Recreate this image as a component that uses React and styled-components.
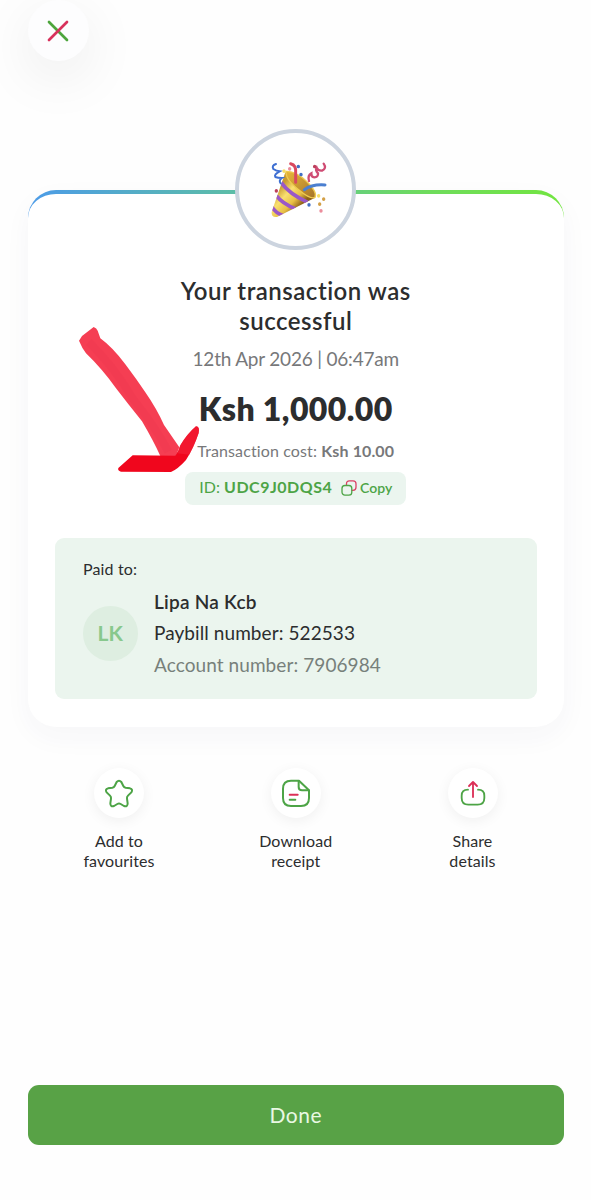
import styled, { createGlobalStyle } from "styled-components";

const actions = [
    { icon: <StarIcon />, lines: ["Add to", "favourites"] },
    { icon: <ReceiptIcon />, lines: ["Download", "receipt"] },
    { icon: <ShareIcon />, lines: ["Share", "details"] },
];

export default function App(){
    return (
        <Page>
            <GlobalStyle />
            <CloseButton aria-label="Close">
                <CloseIcon />
            </CloseButton>
            <Card>
                <Badge>
                    <PartyPopper />
                </Badge>
                <Title>Your transaction was<br />successful</Title>
                <DateText>12th Apr 2026 | 06:47am</DateText>
                <Amount>Ksh 1,000.00</Amount>
                <Cost>Transaction cost: <b>Ksh 10.00</b></Cost>
                <IdPill>
                    <IdText>ID: <b>UDC9J0DQS4</b></IdText>
                    <CopyButton>
                        <CopyIcon />
                        <span>Copy</span>
                    </CopyButton>
                </IdPill>
                <PaidBox>
                    <PaidLabel>Paid to:</PaidLabel>
                    <Recipient>
                        <Avatar>LK</Avatar>
                        <RecipientInfo>
                            <Name>Lipa Na Kcb</Name>
                            <Paybill>Paybill number: 522533</Paybill>
                            <Account>Account number: 7906984</Account>
                        </RecipientInfo>
                    </Recipient>
                </PaidBox>
            </Card>
            <Actions>
                {actions.map(({icon, lines})=>(
                    <Action key={lines[0]}>
                        <ActionCircle>{icon}</ActionCircle>
                        <p>{lines[0]}<br />{lines[1]}</p>
                    </Action>
                ))}
            </Actions>
            <DoneButton>Done</DoneButton>
            <Arrow />
        </Page>
    );
}

function CloseIcon(){
    return (
        <svg width="22" height="22" viewBox="0 0 22 22" fill="none" strokeWidth="2.7" strokeLinecap="round">
            <path d="M2 2L20 20" stroke="#4da53c" />
            <path d="M20 2L2 20" stroke="#d8325c" />
        </svg>
    );
}

function StarIcon(){
    return (
        <svg width="50" height="50" viewBox="0 0 150 150" fill="none" stroke="#4da446" strokeWidth="6" strokeLinejoin="round">
            <path d="M68 42Q75 34 82 42L88 54Q90 58 95 59L108 61Q118 64 112 73L102 83Q98 87 99 92L101 106Q101 118 90 114L80 108Q75 105 70 108L60 114Q49 118 49 106L51 92Q52 87 48 83L38 73Q32 64 42 61L55 59Q60 58 62 54Z" />
        </svg>
    );
}

function ReceiptIcon(){
    return (
        <svg width="50" height="50" viewBox="0 0 150 150" fill="none" stroke="#4da446" strokeWidth="6" strokeLinejoin="round" strokeLinecap="round">
            <path d="M84 38H60Q36 38 36 62V90Q36 114 60 114H90Q114 114 114 90V67Z" />
            <path d="M83 39V57Q83 67 93 67H113" />
            <path d="M56 80H80" stroke="#dc3057" />
            <path d="M56 95H73" />
        </svg>
    );
}

function ShareIcon(){
    return (
        <svg width="50" height="50" viewBox="0 0 150 150" fill="none" strokeWidth="5.5" strokeLinejoin="round" strokeLinecap="round">
            <path d="M60 65C48 65 41 72 41 83V90Q41 110 61 110H89Q109 110 109 90V83C109 72 102 65 90 65" stroke="#4da446" />
            <path d="M75 87V42M63 54L75 42L87 54" stroke="#dc3057" />
        </svg>
    );
}

function CopyIcon(){
    return (
        <svg width="16" height="16" viewBox="0 0 16 16" fill="none" strokeWidth="1.3" strokeLinecap="round">
            <path d="M5.5 5.2V3.8Q5.5 .9 8.4 .9H12Q15 .9 15 3.8V7.3Q15 10.3 12 10.3H11" stroke="#dc4065" />
            <rect x="1" y="5.5" width="9.8" height="9.6" rx="2.9" stroke="#4da446" />
        </svg>
    );
}

function PartyPopper(){
    return (
        <svg width="64" height="64" viewBox="117 113 192 192" fill="none" strokeLinecap="round">
            <defs>
                <linearGradient id="cone" x1="160" y1="205" x2="222" y2="262" gradientUnits="userSpaceOnUse">
                    <stop offset="0" stopColor="#c99a30" />
                    <stop offset=".35" stopColor="#f9e070" />
                    <stop offset=".7" stopColor="#e8bf45" />
                    <stop offset="1" stopColor="#8c5f18" />
                </linearGradient>
                <linearGradient id="mouth" x1="190" y1="160" x2="260" y2="235" gradientUnits="userSpaceOnUse">
                    <stop offset="0" stopColor="#e2b238" />
                    <stop offset="1" stopColor="#a8772a" />
                </linearGradient>
                <clipPath id="coneClip">
                    <path d="M181 156L140 275Q138 292 156 290L270 232Q226 222 181 156Z" />
                </clipPath>
            </defs>
            <path d="M181 156L140 275Q138 292 156 290L270 232Q226 222 181 156Z" fill="url(#cone)" />
            <g clipPath="url(#coneClip)" stroke="#9a58c8" strokeWidth="11" strokeLinecap="butt">
                <path d="M168 186Q192 220 248 246" />
                <path d="M154 226Q172 250 212 266" />
                <path d="M140 258Q150 278 176 286" />
            </g>
            <path d="M183 153Q212 151 246 184Q278 216 270 231Q258 239 221 208Q180 176 183 153Z" fill="url(#mouth)" stroke="#efcb50" strokeWidth="4" />
            <path d="M197 130Q215 134 212 160V186" stroke="#d9485f" strokeWidth="9" />
            <path d="M238 208Q262 191 300 194" stroke="#4b7fd0" strokeWidth="9" />
            <path d="M153 131Q139 136 145 146Q154 152 164 153Q146 163 151 170Q158 173 171 173Q160 180 167 189" stroke="#3e6fd2" strokeWidth="6" />
            <path d="M296 130Q306 144 291 151Q279 152 275 142Q270 150 279 159Q280 170 268 171Q258 170 259 159Q247 165 252 182" stroke="#cf4c74" strokeWidth="7" />
            <g strokeWidth="10">
                <path d="M177 152V153M281 226V227" stroke="#f5dd65" />
                <path d="M194 145V146M288 271V272" stroke="#eb8d9c" />
                <path d="M220 138V139M228 162V163M252 253V254" stroke="#426fc4" />
                <path d="M269 138V139M154 211V212" stroke="#bd405c" />
                <path d="M296 236V237M284 251V252" stroke="#d3a047" />
            </g>
        </svg>
    );
}

// hand drawn marker pointing at the transaction id
function Arrow(){
    return (
        <ArrowSvg width="150" height="180" viewBox="0 0 450 540">
            <path d="M57 92L66 78L101 51Q110 54 113 62L121 85Q158 112 196 163Q230 208 256 247Q290 296 312 345L358 412L345 445L302 440Q280 392 246 334Q204 282 168 235Q126 176 78 130Q66 114 57 92Z" fill="#f4213a" fillOpacity=".87" />
            <path d="M86 96Q158 164 219 267Q286 350 325 425" fill="none" stroke="#d51f3c" strokeWidth="24" strokeOpacity=".08" />
            <path d="M175 474L218 436L346 437Q358 420 361 406Q382 371 408 349Q420 350 416 369Q402 412 378 450Q354 477 333 486L183 485Q172 482 175 474Z" fill="#f0061d" />
            <path d="M361 406Q382 371 408 349Q420 350 416 369Q406 400 388 434L352 430Z" fill="#f4233a" fillOpacity=".6" />
        </ArrowSvg>
    );
}

const GlobalStyle = createGlobalStyle`
    *{
        box-sizing: border-box;
        margin: 0;
        padding: 0;
    }
    body{
        background-color: #FEFEFE;
        font-family: 'Lato', sans-serif;
        font-variant-ligatures: none;
        color: #2c2d2e;
    }
    button{
        border: none;
        font-family: inherit;
        cursor: pointer;
    }
`;

const Page = styled.div`
    position: relative;
    display: flex;
    flex-direction: column;
    width: 591px;
    height: 1200px;
    padding: 0 27px 55px 27.5px;
    overflow: hidden;
`;
const CloseButton = styled.button`
    display: flex;
    align-items: center;
    justify-content: center;
    width: 61px;
    height: 61px;
    border-radius: 50%;
    background-color: #FDFDFE;
    box-shadow: 0 16px 56px rgba(0, 0, 0, 0.08);
`;
const Card = styled.div`
    display: flex;
    flex-direction: column;
    align-items: center;
    height: 537px;
    margin-top: 129px;
    padding: 0 27.5px;
    border-top: 4px solid transparent;
    border-radius: 28px;
    background: linear-gradient(#FFFFFF, #FFFFFF) padding-box,
        linear-gradient(90deg, #4c9be8, #5fc39c 45%, #6fdc5c 75%, #72e540) 0 0 / 100% 60px no-repeat border-box;
    box-shadow: 0 10px 28px rgba(50, 50, 100, 0.04);
`;
const Badge = styled.div`
    display: flex;
    align-items: center;
    justify-content: center;
    flex-shrink: 0;
    width: 121px;
    height: 121px;
    margin-top: -65px;
    border: 4px solid #ccd4df;
    border-radius: 50%;
    background-color: #FFFFFF;
`;
const Title = styled.h1`
    margin-top: 26px;
    font-weight: 600;
    font-size: 24px;
    line-height: 30px;
    letter-spacing: 0.5px;
    text-align: center;
`;
const DateText = styled.p`
    margin-top: 11px;
    font-size: 19px;
    line-height: 24px;
    letter-spacing: -0.2px;
    color: #77787a;
`;
const Amount = styled.p`
    margin-top: 18px;
    font-weight: 800;
    font-size: 32px;
    line-height: 40px;
    letter-spacing: 0.4px;
`;
const Cost = styled.p`
    margin-top: 12px;
    font-size: 16px;
    line-height: 20px;
    letter-spacing: 0.12px;
    color: #77787a;
`;
const IdPill = styled.div`
    display: flex;
    align-items: center;
    flex-shrink: 0;
    width: 221px;
    height: 33px;
    margin-top: 10.5px;
    padding: 0 14px 1px;
    border-radius: 8px;
    background-color: #ebf5ef;
    color: #4da446;
`;
const IdText = styled.p`
    width: 142px;
    font-size: 16px;
    line-height: 20px;
    padding-bottom: 1px;
    white-space: nowrap;
    b{
        letter-spacing: 0.5px;
    }
`;
const CopyButton = styled.button`
    display: flex;
    align-items: center;
    gap: 3px;
    background: none;
    color: #4da446;
    font-weight: 600;
    font-size: 14px;
    span{
        padding-bottom: 1px;
    }
`;
const PaidBox = styled.div`
    width: 481.5px;
    height: 161.5px;
    margin-top: 33px;
    padding: 20px 28px;
    border-radius: 9px;
    background-color: #ebf5ee;
`;
const PaidLabel = styled.p`
    font-size: 16px;
    line-height: 22px;
    letter-spacing: 0.15px;
`;
const Recipient = styled.div`
    display: flex;
    align-items: center;
    gap: 16.5px;
    margin-top: 6px;
`;
const Avatar = styled.div`
    display: flex;
    align-items: center;
    justify-content: center;
    width: 54.5px;
    height: 54.5px;
    margin-top: 1px;
    padding-bottom: 2px;
    border-radius: 50%;
    background-color: #deeee1;
    color: #88c88d;
    font-weight: 700;
    font-size: 21px;
`;
const RecipientInfo = styled.div`
    font-size: 19px;
    line-height: 31.5px;
    letter-spacing: 0.08px;
`;
const Name = styled.p`
    font-weight: 600;
    letter-spacing: 0.25px;
`;
const Paybill = styled.p`
    color: #2c2d2e;
`;
const Account = styled.p`
    color: #77807b;
`;
const Actions = styled.div`
    display: flex;
    justify-content: space-between;
    margin-top: 41px;
    padding: 0 31px;
`;
const Action = styled.div`
    display: flex;
    flex-direction: column;
    align-items: center;
    width: 121px;
    p{
        margin-top: 13px;
        font-size: 16px;
        line-height: 20px;
        letter-spacing: 0.1px;
        text-align: center;
    }
`;
const ActionCircle = styled.div`
    width: 50px;
    height: 50px;
    border-radius: 50%;
    background-color: #FFFFFF;
    box-shadow: 0 3px 14px rgba(0, 0, 0, 0.06);
`;
const DoneButton = styled.button`
    height: 60px;
    margin-top: auto;
    padding-bottom: 2px;
    border-radius: 11px;
    background-color: #58a246;
    color: #e9f8e3;
    font-size: 21px;
    letter-spacing: 0.5px;
`;
const ArrowSvg = styled.svg`
    position: absolute;
    left: 60px;
    top: 310px;
    pointer-events: none;
`;
